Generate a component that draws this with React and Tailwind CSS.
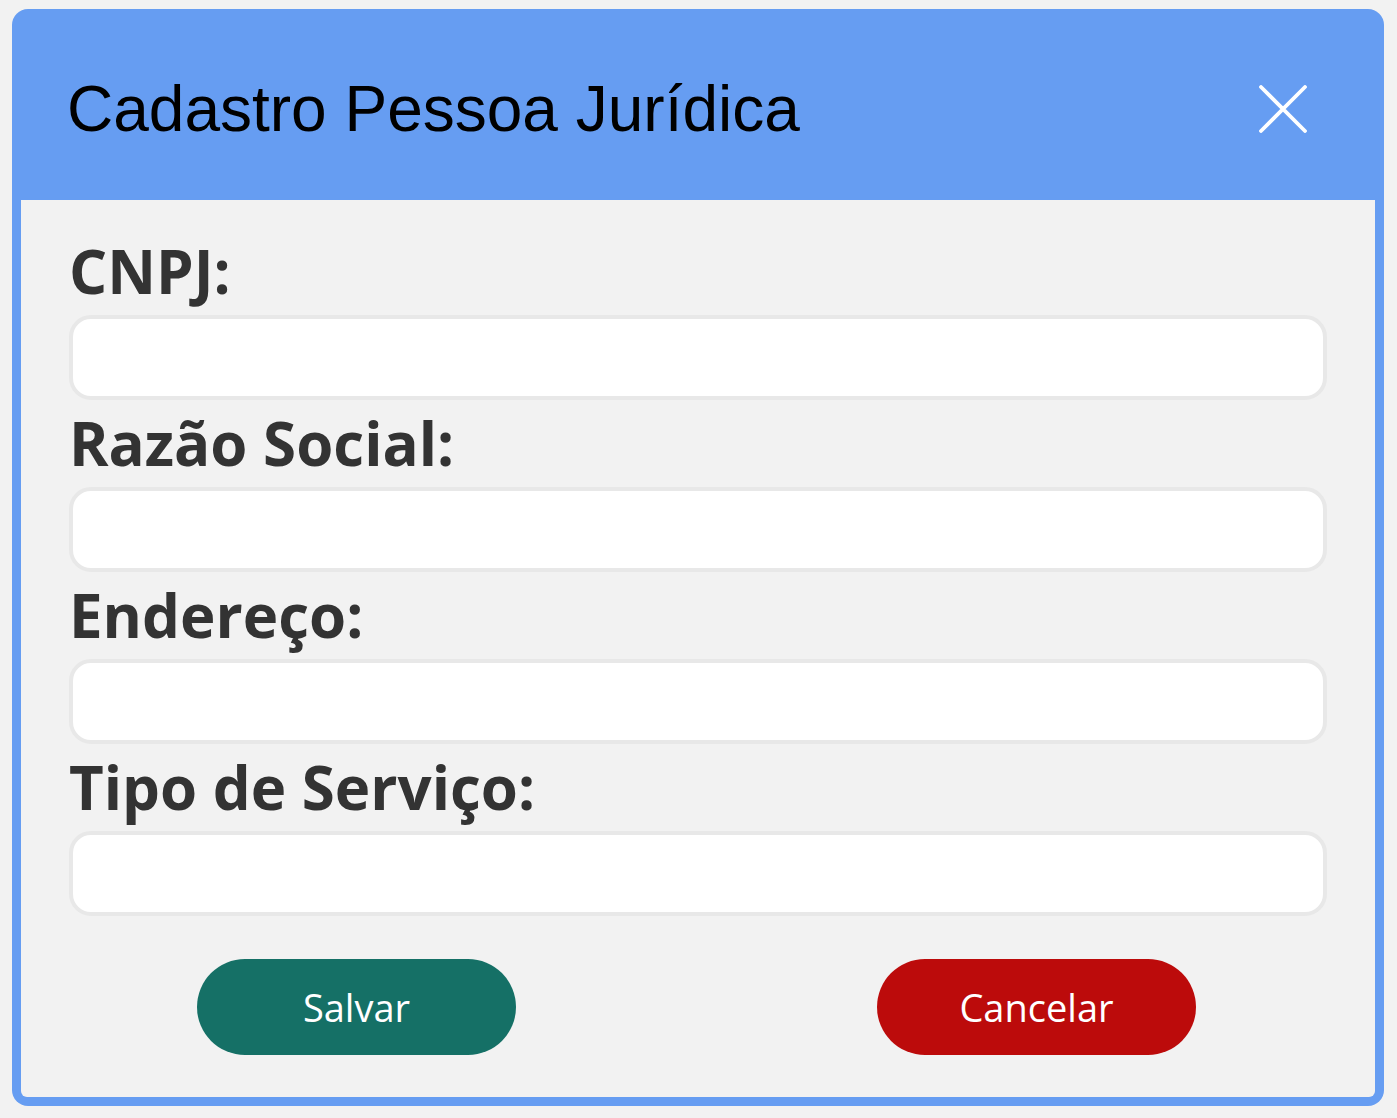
import React from "react";

const fields = ["CNPJ:", "Razão Social:", "Endereço:", "Tipo de Serviço:"];

export default function App() {
  return (
    <div className="min-h-[1118px] w-[1397px] bg-[#f2f2f2] pl-[12px] pt-[9px]">
      <div className="flex h-[1097px] w-[1372px] flex-col rounded-[16px] bg-[#669df2] px-[9px] pb-[9px]">
        <div className="flex h-[191px] shrink-0 items-center justify-between pl-[46px] pr-[68px] pt-[8px]">
          <h1
            className="text-[64px] leading-none text-black"
            style={{ fontFamily: '"Liberation Sans", Arial, sans-serif' }}
          >
            Cadastro Pessoa Jurídica
          </h1>
          <button className="flex h-[48px] w-[48px] items-center justify-center">
            <svg width="48" height="48" viewBox="0 0 48 48" fill="none">
              <path d="M2 2 L46 46 M46 2 L2 46" stroke="white" strokeWidth="3.8" strokeLinecap="round" />
            </svg>
          </button>
        </div>
        <div
          className="flex flex-1 flex-col rounded-b-[6px] bg-[#f2f2f2] px-[48px] pt-[28px]"
          style={{ fontFamily: '"Open Sans", sans-serif' }}
        >
          {fields.map((f) => (
            <div key={f} className="flex flex-col">
              <label className="h-[87px] text-[60px] font-bold leading-[87px] text-[#333333]">{f}</label>
              <input className="h-[85px] w-[1258px] rounded-[22px] border-[4px] border-[#e8e8e8] bg-white outline-none" />
            </div>
          ))}
          <div className="mt-[43px] flex justify-between pl-[128px] pr-[131px]">
            <button className="h-[96px] w-[319px] rounded-full bg-[#157066] text-[38px] text-white">Salvar</button>
            <button className="h-[96px] w-[319px] rounded-full bg-[#bc0b0b] text-[38px] text-white">Cancelar</button>
          </div>
        </div>
      </div>
    </div>
  );
}
